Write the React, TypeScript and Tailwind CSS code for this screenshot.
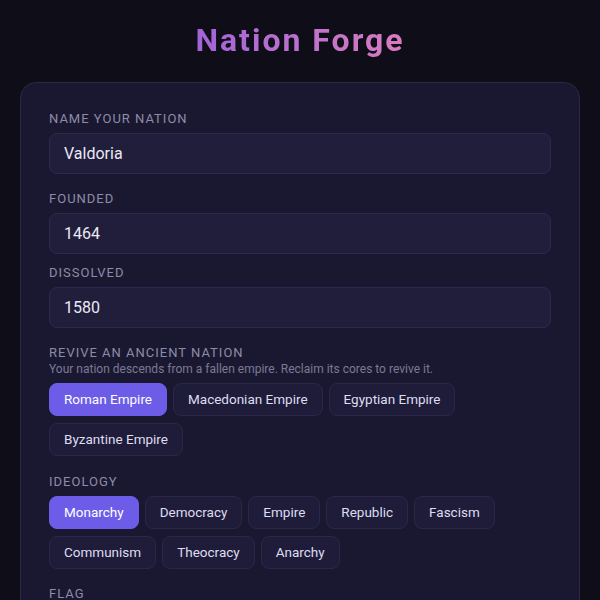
import React, { useState } from 'react';

const ancient = ['Roman Empire', 'Macedonian Empire', 'Egyptian Empire', 'Byzantine Empire'];
const ideologies = ['Monarchy', 'Democracy', 'Empire', 'Republic', 'Fascism', 'Communism', 'Theocracy', 'Anarchy'];

const Label: React.FC<{ children: React.ReactNode }> = ({ children }) => (
  <div className="text-[13px] leading-4 uppercase tracking-[1px] text-[#8e8ba8] mb-1.5">{children}</div>
);

const Field: React.FC<{ label: string; value: string; onChange: (v: string) => void }> = ({ label, value, onChange }) => (
  <div>
    <Label>{label}</Label>
    <input
      value={value}
      onChange={(e) => onChange(e.target.value)}
      className="w-full h-[41px] px-[14px] rounded-lg bg-[#211e3c] border border-[#2c2950] text-[16px] text-[#ebe9f5] outline-none"
    />
  </div>
);

const Chips: React.FC<{ items: string[]; selected: string; onSelect: (v: string) => void }> = ({ items, selected, onSelect }) => (
  <div className="flex flex-wrap gap-[7px_6px]">
    {items.map((item) => (
      <button
        key={item}
        onClick={() => onSelect(item)}
        className={
          item === selected
            ? 'h-[33px] px-[14px] rounded-lg border border-[#6c5ce7] bg-[#6c5ce7] text-[13.5px] text-white'
            : 'h-[33px] px-[14px] rounded-lg border border-[#2a2748] bg-[#1f1c3a] text-[13.5px] text-[#dedcef]'
        }
      >
        {item}
      </button>
    ))}
  </div>
);

export default function App() {
  const [name, setName] = useState('Valdoria');
  const [founded, setFounded] = useState('1464');
  const [dissolved, setDissolved] = useState('1580');
  const [origin, setOrigin] = useState('Roman Empire');
  const [ideology, setIdeology] = useState('Monarchy');

  return (
    <div className="min-h-screen bg-[#0e0d18] px-5 pt-[20px] pb-10" style={{ fontFamily: 'Roboto, "Noto Sans", sans-serif' }}>
      <h1 className="text-center text-[32px] leading-[40px] font-bold tracking-[2px]">
        <span className="bg-gradient-to-r from-[#a263d9] to-[#d97cbf] bg-clip-text text-transparent">Nation Forge</span>
      </h1>

      <div className="mt-[22px] rounded-2xl bg-[#1a1830] border border-[#2a2845] px-7 pt-7 pb-8 flex flex-col">
        <Field label="Name your nation" value={name} onChange={setName} />

        <div className="mt-[17px] flex flex-col gap-[11px]">
          <Field label="Founded" value={founded} onChange={setFounded} />
          <Field label="Dissolved" value={dissolved} onChange={setDissolved} />
        </div>

        <div className="mt-[17px]">
          <div className="text-[13px] leading-4 uppercase tracking-[1px] text-[#8e8ba8]">Revive an ancient nation</div>
          <p className="text-[12px] leading-4 text-[#7b7895] mb-1.5">Your nation descends from a fallen empire. Reclaim its cores to revive it.</p>
          <Chips items={ancient} selected={origin} onSelect={setOrigin} />
        </div>

        <div className="mt-[18px]">
          <Label>Ideology</Label>
          <Chips items={ideologies} selected={ideology} onSelect={setIdeology} />
        </div>

        <div className="mt-[17px]">
          <Label>Flag</Label>
          <div className="h-24 rounded-lg bg-[#211e3c] border border-[#2c2950]" />
        </div>
      </div>
    </div>
  );
}
